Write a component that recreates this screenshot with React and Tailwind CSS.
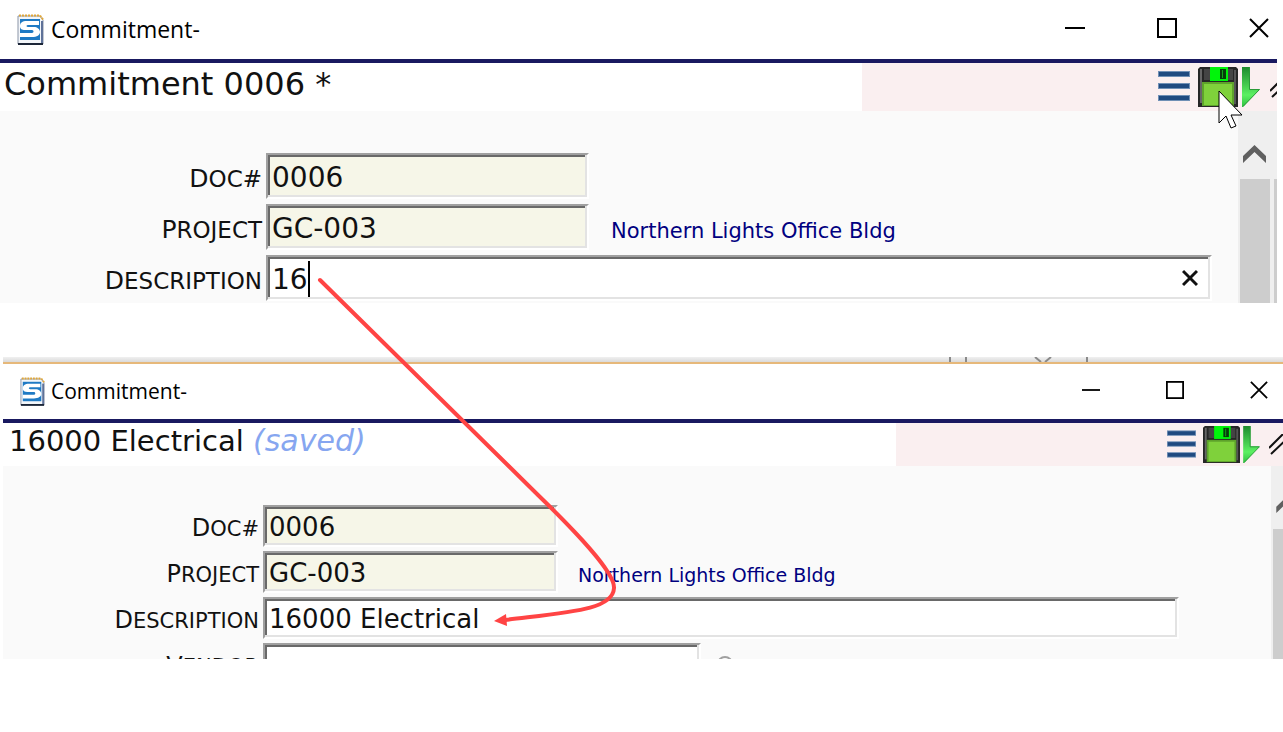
import React, { useState } from "react";

const INPUT_BASE =
  "block border-2 border-t-[#a0a0a0] border-l-[#a0a0a0] border-r-white border-b-white rounded-none outline-none px-1 pt-0.5 text-[#111] shadow-[inset_-2px_-2px_#e3e3e3,inset_2px_2px_#696969]";

function LogoIcon({ className }) {
  return (
    <svg className={className} viewBox="0 0 27 31" aria-hidden="true">
      <path d="M1 2h22l3 4v24H1z" fill="#f3f6fa" stroke="#8a94a6" strokeWidth="1" />
      <path d="M25 7v22" stroke="#5f7299" strokeWidth="2" fill="none" />
      <path d="M1 30h25" stroke="#1c2638" strokeWidth="2" fill="none" />
      <path d="M2 1.5h21l3 4" stroke="#e0a73a" strokeWidth="2" strokeDasharray="2 1" fill="none" />
      <rect x="3" y="5" width="20" height="21" fill="#1f7ac4" />
      <path
        d="M22 7H10c-5 0-7 2-7 5s2 4 5 4h7c2 0 2 3 0 3H3v4h12c5 0 8-2 8-5s-3-5-6-5h-6c-2 0-2-2 0-2h11z"
        fill="#fff"
      />
    </svg>
  );
}

function MenuIcon({ className }) {
  return (
    <svg className={className} viewBox="0 0 32 30" aria-hidden="true">
      {[0, 12, 24].map((y) => (
        <g key={y}>
          <rect x="0" y={y} width="32" height="6" fill="#6f8fb5" />
          <rect x="1" y={y + 1} width="30" height="4" fill="#1f4a80" />
        </g>
      ))}
    </svg>
  );
}

function SaveIcon({ className }) {
  return (
    <svg className={className} viewBox="0 0 40 40" aria-hidden="true">
      <path d="M2 0h36l2 2v38H0V2z" fill="#262626" />
      <path d="M2 2h2v34H2z" fill="#666" />
      <path d="M36 3h2v34h-2z" fill="#555" />
      <rect x="6" y="2" width="6" height="11" fill="#444" />
      <rect x="30" y="2" width="5" height="11" fill="#444" />
      <rect x="12" y="0" width="18" height="14" fill="#00f50a" />
      <rect x="22" y="2" width="6" height="10" fill="#063d0a" />
      <rect x="24" y="3" width="1" height="8" fill="#12a51c" />
      <rect x="4" y="15" width="32" height="24" fill="#5ea32b" />
      <rect x="6" y="17" width="28" height="21" fill="#7fd13b" />
    </svg>
  );
}

function DownIcon({ className }) {
  return (
    <svg className={className} viewBox="0 0 18 40" aria-hidden="true">
      <defs>
        <linearGradient id="downFill" x1="0" y1="0" x2="0" y2="1">
          <stop offset="0" stopColor="#1d8a2d" />
          <stop offset="0.7" stopColor="#5cf062" />
          <stop offset="1" stopColor="#2fc040" />
        </linearGradient>
      </defs>
      <path d="M0 0h8v22h10L1 40H0z" fill="url(#downFill)" />
      <path d="M7.500 0v22.500H17.500L1 39.500" fill="none" stroke="#2a9a38" strokeWidth="1" />
    </svg>
  );
}

function SlashesIcon({ className }) {
  return (
    <svg className={className} viewBox="0 0 20 22" fill="none" stroke="#111" strokeWidth="2" aria-hidden="true">
      <path d="M0 14L14 0M2 20L20 3" />
    </svg>
  );
}

function WindowButtons({ size, gap }) {
  const props = { viewBox: "0 0 20 20", fill: "none", stroke: "#000", strokeWidth: 2, className: size };
  return (
    <div className={`flex items-center pb-1 ${gap}`}>
      <button type="button" aria-label="Minimize" className={size}>
        <svg {...props}>
          <path d="M0 10h20" />
        </svg>
      </button>
      <button type="button" aria-label="Maximize" className={size}>
        <svg {...props}>
          <rect x="1" y="1" width="18" height="18" />
        </svg>
      </button>
      <button type="button" aria-label="Close" className={size}>
        <svg {...props}>
          <path d="M1 1l18 18M19 1L1 19" />
        </svg>
      </button>
    </div>
  );
}

function Row({ label, htmlFor, labelClass, children }) {
  return (
    <div className="flex items-baseline">
      <label
        htmlFor={htmlFor}
        className={`shrink-0 text-right uppercase leading-none text-[#111] ${labelClass}`}
      >
        {label}
      </label>
      {children}
    </div>
  );
}

function UnsavedWindow() {
  const [description, setDescription] = useState("16");
  const labelClass = "w-[266px] pr-1 text-[23px] first-letter:text-[25px]";
  const field = "h-[46px] text-[28px]";

  return (
    <section className="mr-1.5 overflow-hidden">
      <header className="flex h-[63px] items-center justify-between border-b-4 border-[#191960] pl-[17px] pr-2">
        <div className="flex items-center gap-[7px]">
          <LogoIcon className="h-[31px] w-[27px]" />
          <span className="font-['Open_Sans',sans-serif] text-[23px] text-black">Commitment-</span>
        </div>
        <WindowButtons size="size-5" gap="gap-[72px]" />
      </header>

      <div className="flex h-12 justify-between">
        <h1 className="pl-1 text-[32px] leading-[42px] text-[#111]">Commitment 0006 *</h1>
        <div className="flex w-[415px] items-start justify-end gap-1 overflow-hidden bg-[#faeff0] pt-1">
          <button type="button" aria-label="Menu" className="mr-1 pt-1">
            <MenuIcon className="h-[30px] w-8" />
          </button>
          <button type="button" aria-label="Save">
            <SaveIcon className="size-10" />
          </button>
          <button type="button" aria-label="Next">
            <DownIcon className="h-10 w-[18px]" />
          </button>
          <button type="button" aria-label="More" className="w-[13px] overflow-hidden pl-1.5 pt-2.5">
            <SlashesIcon className="h-[22px] w-5" />
          </button>
        </div>
      </div>

      <div className="flex bg-[#fafafa]">
        <form className="flex flex-1 flex-col gap-[5px] pt-[42px] pr-[26px] pb-0.5">
          <Row label="Doc#" htmlFor="doc-a" labelClass={labelClass}>
            <input id="doc-a" readOnly value="0006" className={`${INPUT_BASE} ${field} w-[323px] bg-[#f6f6e8]`} />
          </Row>
          <Row label="Project" htmlFor="project-a" labelClass={labelClass}>
            <input id="project-a" readOnly value="GC-003" className={`${INPUT_BASE} ${field} w-[323px] bg-[#f6f6e8]`} />
            <span className="ml-[22px] text-[21px] leading-none text-[#000080]">Northern Lights Office Bldg</span>
          </Row>
          <Row label="Description" htmlFor="description-a" labelClass={labelClass}>
            <div className="relative flex-1">
              <input
                id="description-a"
                value={description}
                onChange={(e) => setDescription(e.target.value)}
                className={`${INPUT_BASE} ${field} w-full bg-white`}
              />
              <span className="absolute left-[42px] top-1.5 h-9 w-0.5 bg-black" />
              <button
                type="button"
                aria-label="Clear"
                onClick={() => setDescription("")}
                className="absolute right-3.5 top-3.5"
              >
                <svg className="h-[18px] w-4" viewBox="0 0 16 18" stroke="#111" strokeWidth="3" aria-hidden="true">
                  <path d="M1 2l14 14M15 2L1 16" />
                </svg>
              </button>
            </div>
          </Row>
        </form>

        {/* Scrollbar */}
        <div className="flex w-[39px] flex-col bg-[#efefef]">
          <div className="flex h-[68px] items-end pb-4 pl-[5px]">
            <svg className="h-[18px] w-[23px]" viewBox="0 0 23 18" aria-hidden="true">
              <path d="M0 11L11.500 0L23 11v7L11.500 7L0 18z" fill="#606060" />
            </svg>
          </div>
          <div className="flex flex-1 justify-between pl-0.5">
            <div className="w-[30px] bg-[#cdcdcd]" />
            <div className="w-[3px] bg-[#cdcdcd]" />
          </div>
        </div>
      </div>
    </section>
  );
}

function SavedWindow() {
  const [description, setDescription] = useState("16000 Electrical");
  const labelClass = "w-[260px] pr-1 text-[21px] first-letter:text-[24px]";
  const field = "h-[42px] text-[26px]";

  return (
    <section className="ml-[3px] h-[302px] overflow-hidden">
      {/* Edge of the window behind */}
      <svg className="block h-[5px] w-full bg-linear-to-b from-[#f0f0f0] to-[#dadada]" aria-hidden="true">
        <path d="M947 0v5M963 0v5M1084 0v5M1032 0l6 5M1048 0l-6 5" stroke="#8a8a8a" strokeWidth="2" fill="none" />
      </svg>

      <header className="flex h-[61px] items-center justify-between border-b-4 border-t-2 border-b-[#191960] border-t-[#e6b87a] pl-[17px] pr-[15px]">
        <div className="flex items-center gap-1.5">
          <LogoIcon className="h-[29px] w-[25px]" />
          <span className="font-['Open_Sans',sans-serif] text-[21px] text-black">Commitment-</span>
        </div>
        <WindowButtons size="size-[18px]" gap="gap-[66px]" />
      </header>

      <div className="flex h-[43px] justify-between">
        <h1 className="pl-1.5 text-[29px] leading-[36px] text-[#111]">
          16000 Electrical <em className="text-[30px] text-[#86a6f0]">(saved)</em>
        </h1>
        <div className="flex w-[387px] items-start justify-end gap-[3px] overflow-hidden bg-[#faeff0] pt-[3px]">
          <button type="button" aria-label="Menu" className="mr-1 pt-1">
            <MenuIcon className="h-[28px] w-[29px]" />
          </button>
          <button type="button" aria-label="Save">
            <SaveIcon className="size-[37px]" />
          </button>
          <button type="button" aria-label="Next">
            <DownIcon className="h-[37px] w-[17px]" />
          </button>
          <button type="button" aria-label="More" className="w-5 overflow-hidden pl-1.5 pt-2">
            <SlashesIcon className="h-[22px] w-5" />
          </button>
        </div>
      </div>

      <div className="flex bg-[#fafafa]">
        <form className="flex flex-1 flex-col gap-1 pt-[39px] pr-[92px]">
          <Row label="Doc#" htmlFor="doc-b" labelClass={labelClass}>
            <input id="doc-b" readOnly value="0006" className={`${INPUT_BASE} ${field} w-[295px] bg-[#f6f6e8]`} />
          </Row>
          <Row label="Project" htmlFor="project-b" labelClass={labelClass}>
            <input id="project-b" readOnly value="GC-003" className={`${INPUT_BASE} ${field} w-[295px] bg-[#f6f6e8]`} />
            <span className="ml-5 text-[19px] leading-none text-[#000080]">Northern Lights Office Bldg</span>
          </Row>
          <Row label="Description" htmlFor="description-b" labelClass={labelClass}>
            <input
              id="description-b"
              value={description}
              onChange={(e) => setDescription(e.target.value)}
              className={`${INPUT_BASE} ${field} min-w-0 flex-1 bg-white`}
            />
          </Row>
          <Row label="Vendor" htmlFor="vendor-b" labelClass={labelClass}>
            <input id="vendor-b" className={`${INPUT_BASE} ${field} w-[438px] bg-white`} />
            <svg className="ml-4 size-4 self-center" viewBox="0 0 16 16" fill="none" stroke="#a0a0a0" strokeWidth="2" aria-hidden="true">
              <circle cx="8" cy="8" r="7" />
            </svg>
          </Row>
        </form>

        {/* Scrollbar */}
        <div className="flex w-3 flex-col overflow-hidden bg-[#efefef] pl-0.5">
          <div className="flex h-[63px] items-end pb-4 pl-[3px]">
            <svg className="h-4 w-[21px] shrink-0" viewBox="0 0 23 18" aria-hidden="true">
              <path d="M0 11L11.500 0L23 11v7L11.500 7L0 18z" fill="#606060" />
            </svg>
          </div>
          <div className="flex-1 bg-[#cdcdcd]" />
        </div>
      </div>
    </section>
  );
}

function App() {
  return (
    <main className="relative flex min-h-screen flex-col gap-[54px] overflow-hidden bg-white font-['DejaVu_Sans',sans-serif]">
      <UnsavedWindow />
      <SavedWindow />

      {/* Annotation arrow between the two description fields */}
      <svg
        className="pointer-events-none absolute left-0 top-0 h-[640px] w-[640px]"
        viewBox="0 0 640 640"
        fill="none"
        aria-hidden="true"
      >
        <path
          d="M320 280L538 495C575 531 615 572 614 588C613 610 570 612 505 620"
          stroke="#ff4444"
          strokeWidth="4"
          strokeLinecap="round"
        />
        <path d="M494 621l12-7 1 12z" fill="#ff4444" />
      </svg>

      {/* Mouse pointer over the save button */}
      <svg
        className="pointer-events-none absolute right-10 top-[90px] h-10 w-[25px]"
        viewBox="0 0 25 40"
        aria-hidden="true"
      >
        <path d="M1 1v32l7-7 5 12 5-2-5-11h11z" fill="#fff" stroke="#000" strokeWidth="1" />
      </svg>
    </main>
  );
}

export default App;
